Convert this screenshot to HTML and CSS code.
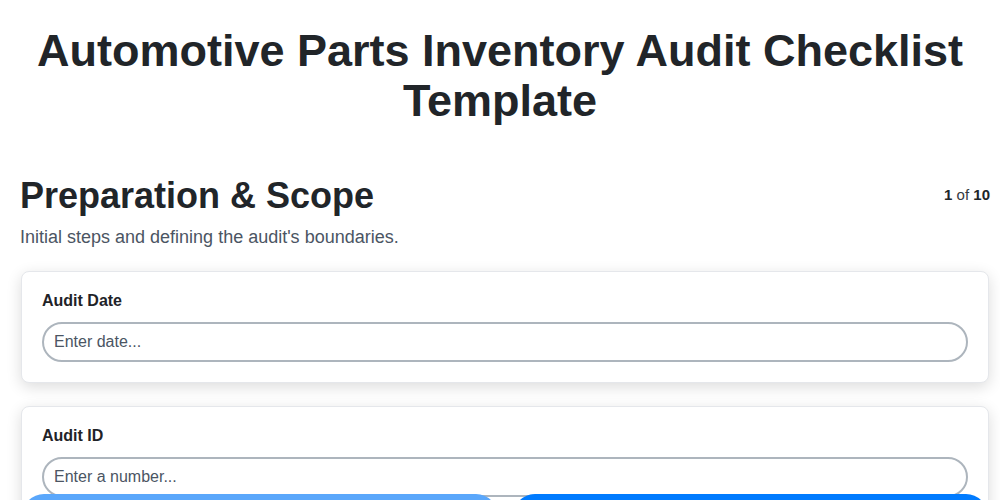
FILE: index.html
```html
<!DOCTYPE html>
<html lang="en">
<head>
    <meta charset="UTF-8">
    <meta name="viewport" content="width=device-width, initial-scale=1.0">
    <title>Automotive Parts Inventory Audit Checklist Template</title>
    <link rel="stylesheet" href="styles.css">
</head>
<body>

    <!-- Page Title -->
    <h1 class="page-title">Automotive Parts Inventory Audit Checklist Template</h1>

    <!-- Current Step -->
    <div class="step" id="step1">
        <div class="step-header">
            <h2>Preparation &amp; Scope</h2>
            <div class="step-count"><b>1</b> of <b>10</b></div>
        </div>
        <p class="step-desc">Initial steps and defining the audit's boundaries.</p>

        <div class="field-card">
            <label for="auditDate">Audit Date</label>
            <input type="text" id="auditDate" placeholder="Enter date...">
        </div>
        <div class="field-card">
            <label for="auditId">Audit ID</label>
            <input type="text" id="auditId" placeholder="Enter a number...">
        </div>
        <div class="field-card">
            <label for="auditor">Auditor Name</label>
            <input type="text" id="auditor" placeholder="Enter text...">
        </div>
    </div>

    <!-- Step Navigation -->
    <div class="step-nav">
        <button class="nav-button prev" disabled><span>Previous</span></button>
        <button class="nav-button next"><span>Next</span></button>
    </div>

</body>
</html>
```

FILE: styles.css
```css
body {
    margin: 0;
    padding: 0;
    background-color: #fff;
    font-family: "Liberation Sans", Arial, sans-serif;
    color: #212529;
    overflow: hidden;
}

.page-title {
    margin: 0;
    padding: 26px 20px 0 20px;
    font-size: 45px;
    line-height: 1.12;
    font-weight: bold;
    text-align: center;
    color: #212529;
}

.step {
    padding: 48px 10px 80px 20px;
}

.step-header {
    display: flex;
    justify-content: space-between;
    align-items: center;
}

.step-header h2 {
    margin: 0;
    font-size: 36px;
    font-weight: bold;
    color: #212529;
}

.step-count {
    font-size: 15px;
    color: #343a40;
    margin-top: -3px;
}

.step-count b {
    color: #212529;
}

.step-desc {
    margin: 10px 0 23px 0;
    font-size: 18px;
    color: #4b5563;
}

.field-card {
    background-color: #fff;
    border: 1px solid #e5e7eb;
    border-radius: 8px;
    padding: 20px;
    margin: 0 1px 23px 1px;
    box-shadow: 0 4px 15px rgba(0, 0, 0, 0.14);
}

.field-card label {
    display: block;
    font-size: 16px;
    font-weight: bold;
    color: #1f2328;
    margin-bottom: 12px;
}

.field-card input {
    display: block;
    box-sizing: border-box;
    width: 100%;
    height: 40px;
    padding: 0 10px;
    border: 2px solid #adb5bd;
    border-radius: 20px;
    font-family: "Liberation Sans", Arial, sans-serif;
    font-size: 16px;
    color: #212529;
    background-color: #fff;
    outline: none;
}

.field-card input::placeholder {
    color: #4b5563;
}

.step-nav {
    position: fixed;
    top: 494px;
    left: 22px;
    right: 12px;
    display: flex;
    gap: 15px;
}

.nav-button {
    flex: 1;
    height: 46px;
    padding: 22px 0 0 0;
    border: none;
    border-radius: 22px;
    display: flex;
    justify-content: center;
    align-items: flex-start;
    font-family: "Liberation Sans", Arial, sans-serif;
    font-size: 16px;
    color: white;
    background-color: #007bff;
    cursor: pointer;
}

.nav-button.prev {
    background-color: #5aa7fb;
}
```
